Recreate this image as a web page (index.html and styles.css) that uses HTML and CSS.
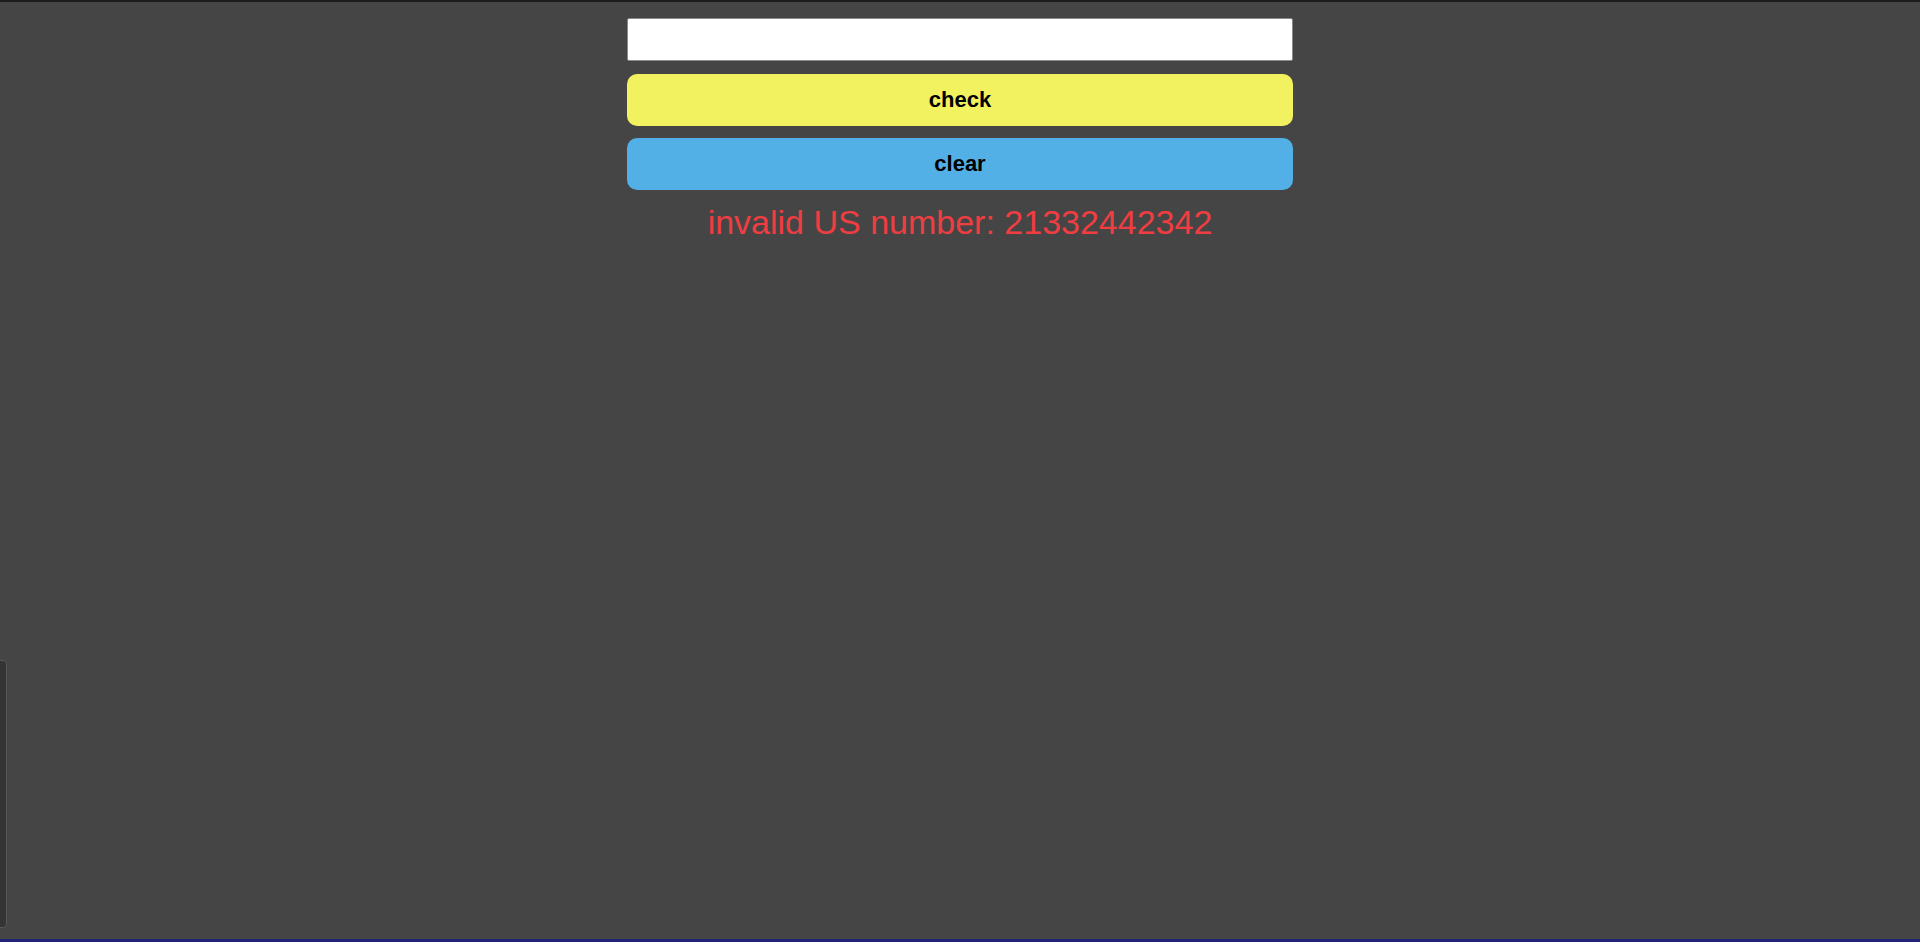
FILE: index.html
```html
<!DOCTYPE html>
<html lang="en">
<head>
<meta charset="utf-8">
<title>Phone Number Validator</title>
<link rel="stylesheet" href="styles.css">
</head>
<body>
<div class="top-line"></div>
<main class="container">
  <input class="user-input" type="text" value="">
  <button class="btn btn-check">check</button>
  <button class="btn btn-clear">clear</button>
  <div class="results">invalid US number: 21332442342</div>
</main>
<div class="side-panel"></div>
<div class="bottom-line"></div>
</body>
</html>
```

FILE: styles.css
```css
html, body {
  height: 100%;
}
body {
  margin: 8px;
  background: #454545;
  font-family: "Liberation Sans", Arial, sans-serif;
  overflow: hidden;
}
.top-line {
  position: absolute;
  top: 0;
  left: 0;
  right: 0;
  height: 2px;
  background: #1c1c1c;
}
.container {
  width: 35%;
  margin: 10px auto 0;
  display: flex;
  flex-direction: column;
}
.user-input {
  box-sizing: border-box;
  height: 43px;
  width: 100%;
  margin: 0;
  border: 1px solid #8a8a8a;
  border-radius: 2px;
  background: #fff;
  font-size: 20px;
  font-family: "Liberation Sans", Arial, sans-serif;
}
.btn {
  box-sizing: border-box;
  height: 52px;
  width: 100%;
  border: none;
  border-radius: 10px;
  font-family: "Liberation Sans", Arial, sans-serif;
  font-weight: bold;
  font-size: 22px;
  color: #000;
  margin: 0;
  padding: 0;
}
.btn-check {
  margin-top: 13px;
  background: #f2f261;
}
.btn-clear {
  margin-top: 12px;
  background: #52b0e6;
}
.results {
  margin-top: 12px;
  text-align: center;
  color: #ef3d42;
  font-size: 34px;
  line-height: 40px;
}
.side-panel {
  position: absolute;
  left: -6px;
  top: 660px;
  width: 11px;
  height: 266px;
  background: #343434;
  border: 1px solid #575757;
  border-radius: 4px;
}
.bottom-line {
  position: absolute;
  left: 0;
  right: 0;
  bottom: 0;
  height: 3px;
  background: #23237a;
}
```
